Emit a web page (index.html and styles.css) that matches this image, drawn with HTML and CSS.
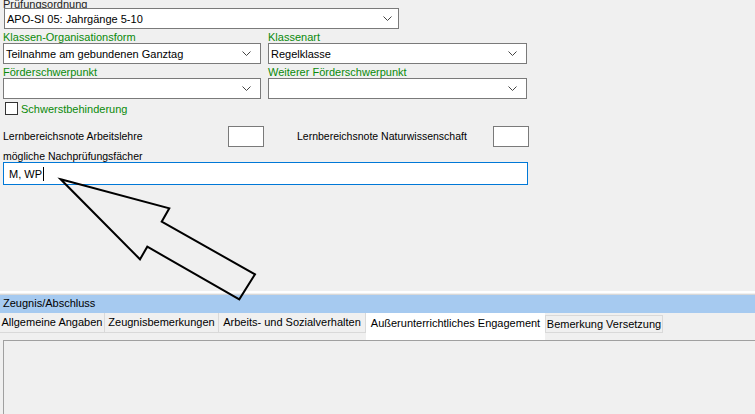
FILE: index.html
```html
<!DOCTYPE html>
<html lang="de">
<head>
<meta charset="utf-8">
<title>Zeugnis</title>
<link rel="stylesheet" href="styles.css">
</head>
<body>
<div class="page">
  <div class="top">
    <div class="lbl lbl-top">Prüfungsordnung</div>
    <div class="select sel-wide"><span>APO-SI 05: Jahrgänge 5-10</span><svg class="chev" width="9" height="5" viewBox="0 0 9 5"><path d="M0.5 0.5 L4.5 4.5 L8.5 0.5" fill="none" stroke="#444" stroke-width="1"/></svg></div>
    <div class="grid">
      <div class="lbl green">Klassen-Organisationsform</div>
      <div class="lbl green">Klassenart</div>
      <div class="select"><span>Teilnahme am gebundenen Ganztag</span><svg class="chev" width="9" height="5" viewBox="0 0 9 5"><path d="M0.5 0.5 L4.5 4.5 L8.5 0.5" fill="none" stroke="#444" stroke-width="1"/></svg></div>
      <div class="select"><span>Regelklasse</span><svg class="chev" width="9" height="5" viewBox="0 0 9 5"><path d="M0.5 0.5 L4.5 4.5 L8.5 0.5" fill="none" stroke="#444" stroke-width="1"/></svg></div>
      <div class="lbl green">Förderschwerpunkt</div>
      <div class="lbl green">Weiterer Förderschwerpunkt</div>
      <div class="select"><span></span><svg class="chev" width="9" height="5" viewBox="0 0 9 5"><path d="M0.5 0.5 L4.5 4.5 L8.5 0.5" fill="none" stroke="#444" stroke-width="1"/></svg></div>
      <div class="select"><span></span><svg class="chev" width="9" height="5" viewBox="0 0 9 5"><path d="M0.5 0.5 L4.5 4.5 L8.5 0.5" fill="none" stroke="#444" stroke-width="1"/></svg></div>
    </div>
    <div class="check-row"><span class="box"></span><span class="green">Schwerstbehinderung</span></div>
    <div class="note-row">
      <span class="note-lbl n1">Lernbereichsnote Arbeitslehre</span>
      <span class="small-input"></span>
      <span class="note-lbl n2">Lernbereichsnote Naturwissenschaft</span>
      <span class="small-input"></span>
    </div>
    <div class="lbl dark">mögliche Nachprüfungsfächer</div>
    <div class="text-input"><span>M, WP</span><span class="caret"></span></div>
  </div>
  <div class="sep"></div>
  <div class="bar">Zeugnis/Abschluss</div>
  <div class="tabs">
    <div class="tab t1">Allgemeine Angaben</div>
    <div class="tab t2">Zeugnisbemerkungen</div>
    <div class="tab t3">Arbeits- und Sozialverhalten</div>
    <div class="tab active t4">Außerunterrichtliches Engagement</div>
    <div class="tab t5">Bemerkung Versetzung</div>
  </div>
  <div class="panel"></div>
  <svg class="arrow" width="755" height="414" viewBox="0 0 755 414">
    <polygon points="60.7,179.3 169.3,208.3 161.7,221.7 255,274.3 239.3,299.3 147.3,246.7 140,259.3" fill="none" stroke="#000" stroke-width="2" stroke-linejoin="miter"/>
  </svg>
</div>
</body>
</html>
```
FILE: styles.css
```css
* { box-sizing: border-box; }
html, body { margin: 0; padding: 0; }
body {
  background: #f0f0f0;
  font-family: "Liberation Sans", Arial, sans-serif;
  font-size: 11px;
  color: #000;
  width: 755px;
  height: 414px;
  overflow: hidden;
}
.page {
  position: relative;
  width: 755px;
  height: 414px;
  display: flex;
  flex-direction: column;
}
.top {
  height: 291px;
  padding-left: 3px;
  display: flex;
  flex-direction: column;
}
.lbl {
  height: 14px;
  line-height: 14px;
  padding-top: 1px;
  white-space: nowrap;
}
.lbl-top {
  height: 8px;
  line-height: 8px;
  padding-top: 0;
  overflow: visible;
  color: #222;
}
.green { color: #0a8a0a; }
.dark { color: #000; }
.select {
  height: 21px;
  border: 1px solid #7a7a7a;
  background: #fff;
  display: flex;
  align-items: center;
  justify-content: space-between;
  padding: 0 9px 0 2px;
  white-space: nowrap;
}
.sel-wide {
  width: 395px;
  margin-left: 1px;
  padding-left: 2px;
  padding-right: 6px;
}
.chev { display: block; }
.grid {
  display: grid;
  grid-template-columns: 258px 259px;
  column-gap: 7px;
  grid-template-rows: 14px 21px 14px 21px;
}
.check-row {
  display: flex;
  align-items: center;
  height: 18px;
  padding-left: 2px;
  padding-top: 1px;
  gap: 3px;
}
.box {
  width: 13px;
  height: 13px;
  border: 1px solid #333;
  background: #fff;
}
.note-row {
  margin-top: 8px;
  height: 22px;
  display: flex;
  align-items: center;
}
.note-lbl { white-space: nowrap; font-size: 10.5px; }
.n1 { width: 225px; }
.n2 { width: 196px; margin-left: 33px; }
.small-input {
  width: 36px;
  height: 21px;
  border: 1px solid #7a7a7a;
  background: #fff;
}
.note-row + .lbl { height: 15px; line-height: 15px; padding-top: 2px; font-size: 10.5px; }
.text-input {
  width: 525px;
  height: 23px;
  border: 1px solid #0078d7;
  background: #fff;
  display: flex;
  align-items: center;
  padding-left: 5px;
}
.caret {
  width: 1px;
  height: 14px;
  background: #000;
  margin-left: 1px;
}
.sep {
  height: 4px;
  border-top: 2px solid #fff;
  border-bottom: 1px solid #d8d8d8;
}
.bar {
  height: 18px;
  line-height: 17px;
  background: #a6caf0;
  padding-left: 3px;
}
.tabs {
  display: flex;
  height: 27px;
  align-items: flex-start;
}
.tab {
  height: 20px;
  line-height: 18px;
  text-align: center;
  white-space: nowrap;
  background: #f0f0f0;
  border: 1px solid #d9d9d9;
  border-top: none;
  border-left: none;
}
.t1 { width: 105px; }
.t2 { width: 114px; }
.t3 { width: 147px; }
.t4 { width: 179px; }
.t5 { width: 118px; margin-top: 2px; height: 18px; line-height: 16px; border-top: 1px solid #d9d9d9; border-left: 1px solid #d9d9d9; }
.tab.active {
  height: 27px;
  line-height: 20px;
  background: #fff;
  border: none;
}
.panel {
  flex: 1;
  margin-left: 3px;
  border-top: 1px solid #a0a0a0;
  border-left: 1px solid #a0a0a0;
  background: #f0f0f0;
}
.arrow {
  position: absolute;
  left: 0;
  top: 0;
  pointer-events: none;
}
```
